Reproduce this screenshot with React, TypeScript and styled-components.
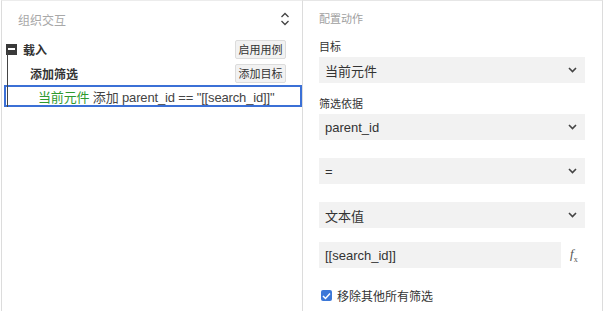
import React from "react";
import styled, { createGlobalStyle } from "styled-components";

const Global = createGlobalStyle`
  html, body { margin: 0; padding: 0; background: #fff; }
  body { font-family: "Liberation Sans", "Noto Sans CJK SC", sans-serif; color: #333; }
  * { box-sizing: border-box; }
`;

const Page = styled.div`
  display: flex;
  width: 603px;
  height: 311px;
  overflow: hidden;
`;

const LeftPanel = styled.div`
  width: 301px;
  margin-left: 1px;
  border-left: 1px solid #dcdcdc;
  border-top: 1px solid #ececec;
  display: flex;
  flex-direction: column;
`;

const PanelHeader = styled.div`
  height: 36px;
  display: flex;
  align-items: center;
  justify-content: space-between;
  padding: 0 12px 0 16px;
  font-size: 12px;
  color: #a8a8a8;
`;

const Tree = styled.div`
  position: relative;
  display: flex;
  flex-direction: column;
`;

const TreeLine = styled.div`
  position: absolute;
  left: 5px;
  top: 15px;
  width: 1px;
  height: 55px;
  background: #444;
`;

const TreeRow = styled.div<{ $indent: number }>`
  height: 24px;
  display: flex;
  align-items: center;
  padding-left: ${(p) => p.$indent}px;
  padding-right: 16px;
  font-size: 12px;
  font-weight: bold;
  color: #333;
`;

const Toggle = styled.span`
  width: 11px;
  height: 11px;
  background: #3a3a3a;
  display: flex;
  align-items: center;
  justify-content: center;
  margin-right: 6px;
  &::after {
    content: "";
    width: 7px;
    height: 1.5px;
    background: #fff;
  }
`;

const RowLabel = styled.span`
  flex: 1;
`;

const SmallButton = styled.button`
  font-family: "Liberation Sans", "Noto Sans CJK SC", sans-serif;
  height: 19px;
  width: 51px;
  padding: 0;
  font-size: 11px;
  font-weight: normal;
  color: #333;
  background: #f2f2f2;
  border: 1px solid #dcdcdc;
  border-radius: 2px;
`;

const SelectedRow = styled.div`
  margin: 0 0 0 2px;
  width: 298px;
  height: 22px;
  border: 2px solid #3b70d6;
  display: flex;
  align-items: center;
  padding-left: 32px;
  font-size: 13px;
  letter-spacing: -0.15px;
  color: #444;
  white-space: pre;
`;

const Green = styled.span`
  color: #2f9a2f;
`;

const RightPanel = styled.div`
  width: 301px;
  border-left: 1px solid #dcdcdc;
  border-right: 1px solid #dcdcdc;
  border-top: 1px solid #e6e6e6;
  display: flex;
  flex-direction: column;
  padding: 0 17px 0 16px;
`;

const Title = styled.div`
  height: 34px;
  display: flex;
  align-items: center;
  font-size: 11px;
  color: #a0a0a0;
`;

const FieldLabel = styled.div<{ $gap?: number }>`
  height: 22px;
  display: flex;
  align-items: center;
  font-size: 11px;
  color: #333;
  margin-top: ${(p) => p.$gap ?? 0}px;
`;

const SelectBox = styled.div<{ $gap?: number }>`
  height: 26px;
  background: #f2f2f2;
  display: flex;
  align-items: center;
  justify-content: space-between;
  padding: 0 8px 0 6px;
  font-size: 13px;
  color: #333;
  margin-top: ${(p) => p.$gap ?? 0}px;
`;

const InputRow = styled.div`
  margin-top: 14px;
  display: flex;
  align-items: center;
  gap: 9px;
`;

const InputBox = styled.div`
  width: 242px;
  height: 26px;
  background: #f2f2f2;
  display: flex;
  align-items: center;
  padding-left: 6px;
  font-size: 13px;
  color: #333;
`;

const Fx = styled.span`
  font-family: "Liberation Serif", serif;
  font-style: italic;
  font-size: 13px;
  color: #555;
  & sub { font-size: 8px; font-style: normal; }
`;

const CheckRow = styled.div`
  margin-top: 19px;
  display: flex;
  align-items: center;
  gap: 5px;
  padding-left: 2px;
  font-size: 12px;
  color: #333;
`;

const CheckBox = styled.span`
  width: 11px;
  height: 11px;
  border-radius: 2px;
  background: #3c78d8;
  display: flex;
  align-items: center;
  justify-content: center;
`;

const Chevron = () => (
  <svg width="9" height="6" viewBox="0 0 9 6">
    <path d="M1 1 L4.5 4.5 L8 1" fill="none" stroke="#444" strokeWidth="1.6" />
  </svg>
);

const UpDown = () => (
  <svg width="10" height="14" viewBox="0 0 10 14">
    <path d="M1.5 5 L5 1.5 L8.5 5" fill="none" stroke="#444" strokeWidth="1.3" />
    <path d="M1.5 9 L5 12.5 L8.5 9" fill="none" stroke="#444" strokeWidth="1.3" />
  </svg>
);

export default function App() {
  return (
    <Page>
      <Global />
      <LeftPanel>
        <PanelHeader>
          <span>组织交互</span>
          <UpDown />
        </PanelHeader>
        <Tree>
          <TreeLine />
          <TreeRow $indent={4}>
            <Toggle />
            <RowLabel>载入</RowLabel>
            <SmallButton>启用用例</SmallButton>
          </TreeRow>
          <TreeRow $indent={28}>
            <RowLabel>添加筛选</RowLabel>
            <SmallButton>添加目标</SmallButton>
          </TreeRow>
          <SelectedRow>
            <Green>当前元件</Green> 添加 parent_id == "[[search_id]]"
          </SelectedRow>
        </Tree>
      </LeftPanel>
      <RightPanel>
        <Title>配置动作</Title>
        <FieldLabel>目标</FieldLabel>
        <SelectBox>
          <span>当前元件</span>
          <Chevron />
        </SelectBox>
        <FieldLabel $gap={9}>筛选依据</FieldLabel>
        <SelectBox>
          <span>parent_id</span>
          <Chevron />
        </SelectBox>
        <SelectBox $gap={18}>
          <span>=</span>
          <Chevron />
        </SelectBox>
        <SelectBox $gap={18}>
          <span>文本值</span>
          <Chevron />
        </SelectBox>
        <InputRow>
          <InputBox>[[search_id]]</InputBox>
          <Fx>f<sub>x</sub></Fx>
        </InputRow>
        <CheckRow>
          <CheckBox>
            <svg width="9" height="8" viewBox="0 0 9 8">
              <path d="M1 4 L3.5 6.5 L8 1.5" fill="none" stroke="#fff" strokeWidth="1.5" />
            </svg>
          </CheckBox>
          <span>移除其他所有筛选</span>
        </CheckRow>
      </RightPanel>
    </Page>
  );
}
